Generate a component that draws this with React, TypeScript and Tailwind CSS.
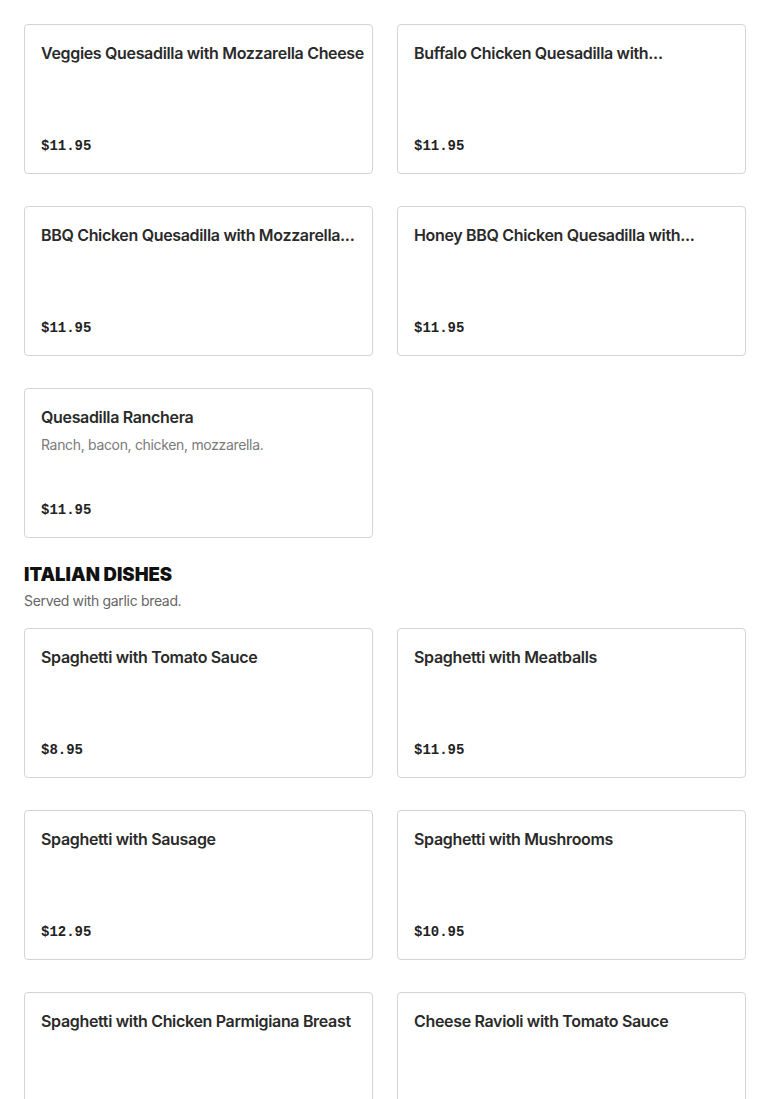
type Item = { name: string; price: string; description?: string };

// names are already shortened the way the menu shows them
const quesadillas: Item[] = [
  { name: "Veggies Quesadilla with Mozzarella Cheese", price: "$11.95" },
  { name: "Buffalo Chicken Quesadilla with...", price: "$11.95" },
  { name: "BBQ Chicken Quesadilla with Mozzarella...", price: "$11.95" },
  { name: "Honey BBQ Chicken Quesadilla with...", price: "$11.95" },
  {
    name: "Quesadilla Ranchera",
    price: "$11.95",
    description: "Ranch, bacon, chicken, mozzarella.",
  },
];

const italian: Item[] = [
  { name: "Spaghetti with Tomato Sauce", price: "$8.95" },
  { name: "Spaghetti with Meatballs", price: "$11.95" },
  { name: "Spaghetti with Sausage", price: "$12.95" },
  { name: "Spaghetti with Mushrooms", price: "$10.95" },
  { name: "Spaghetti with Chicken Parmigiana Breast", price: "$13.95" },
  { name: "Cheese Ravioli with Tomato Sauce", price: "$11.95" },
];

function MenuCard({ item }: { item: Item }) {
  return (
    <div className="flex h-[150px] flex-col justify-between rounded border border-[#d4d4d4] bg-white px-4 pt-4 pb-[17px]">
      <div>
        <h3 className="text-base leading-6 font-semibold whitespace-nowrap text-[#2a2a2a]">
          {item.name}
        </h3>
        {item.description && (
          <p className="mt-[6px] text-sm leading-5 text-[#7a7a7a]">
            {item.description}
          </p>
        )}
      </div>
      <span className="font-['Liberation_Mono',monospace] text-sm leading-5 font-bold tracking-normal text-[#222]">
        {item.price}
      </span>
    </div>
  );
}

function MenuGrid({ items }: { items: Item[] }) {
  return (
    <div className="grid grid-cols-2 gap-x-6 gap-y-8">
      {items.map((item) => (
        <MenuCard key={item.name} item={item} />
      ))}
    </div>
  );
}

export default function App() {
  return (
    <div className="min-h-screen bg-white px-6 pt-6 font-['Inter',sans-serif] tracking-[-0.33px] text-[#222]">
      <MenuGrid items={quesadillas} />

      <section className="mt-6">
        <h2 className="text-[18.5px] leading-6 font-black tracking-normal text-[#111]">
          ITALIAN DISHES
        </h2>
        <p className="mt-[5px] text-sm leading-5 text-[#666]">
          Served with garlic bread.
        </p>
        <div className="mt-[17px]">
          <MenuGrid items={italian} />
        </div>
      </section>
    </div>
  );
}
